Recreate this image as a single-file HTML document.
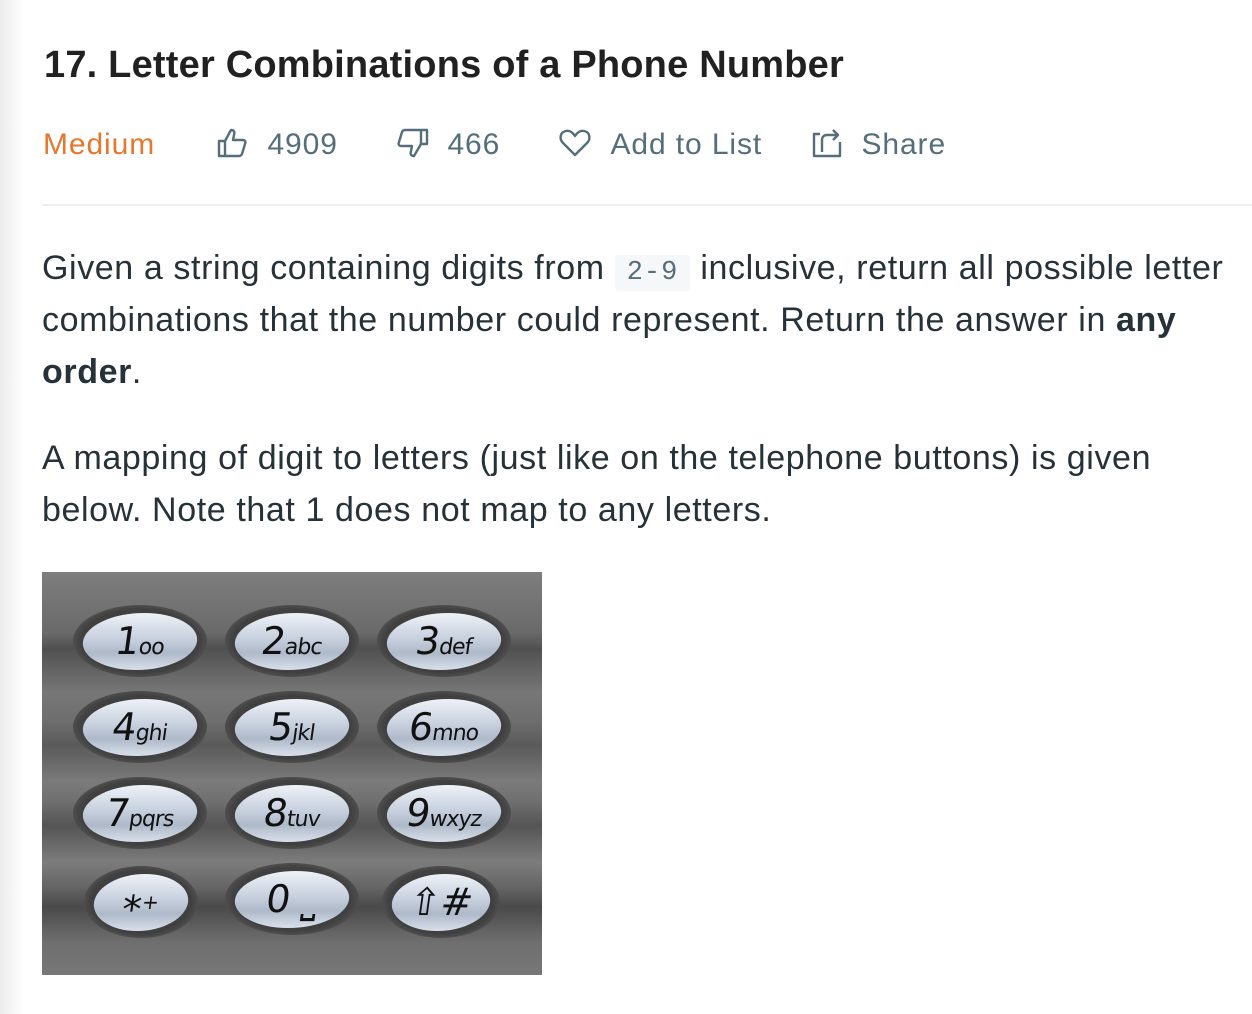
<!DOCTYPE html>
<html><head><meta charset="utf-8"><style>
body{margin:0;width:1252px;height:1014px;background:#fff;position:relative;overflow:hidden;font-family:"Liberation Sans",Helvetica,Arial,sans-serif;color:#263238}
.edge{position:absolute;left:0;top:0;width:24px;height:1014px;background:linear-gradient(90deg,#ececec,#fbfbfb 80%,#fff)}
h1{position:absolute;left:44px;top:44px;margin:0;font-size:38px;font-weight:bold;color:#212121;letter-spacing:0.2px;white-space:nowrap}
.meta{position:absolute;top:128px;font-size:30px;letter-spacing:0.9px;color:#546e7a;white-space:nowrap}
.meta svg{vertical-align:-4px}
.hr{position:absolute;left:42px;right:0;top:204px;height:2px;background:#eeeeee}
p{position:absolute;left:42px;margin:0;font-size:34px;letter-spacing:0.6px;line-height:52px;width:1200px;color:#263238}
code{font-family:"Liberation Mono",monospace;font-size:27px;letter-spacing:1px;background:#f5f7f8;padding:3px 12px;border-radius:4px;color:#546e7a;line-height:1}
.pad{position:absolute;left:42px;top:572px;width:500px;height:403px;background:linear-gradient(180deg,#7e7e7e 0%,#6a6a6a 15%,#505050 19%,#777 30%,#6e6e6e 37%,#5a5a5a 43%,#7b7b7b 52%,#6f6f6f 57%,#555 63%,#7c7c7c 72%,#666 78%,#4a4a4a 83%,#6f6f6f 92%,#777 100%)}
.k{position:absolute;width:134px;height:72px;border-radius:50%;background:radial-gradient(ellipse at center,#404040 62%,#5a5a5a 78%,rgba(90,90,90,0) 100%)}
.k i{position:absolute;left:10px;top:8px;width:114px;height:57px;border-radius:50%;background:linear-gradient(180deg,#eef2f8 0%,#c7d0de 45%,#aeb9c9 70%,#d9e0ea 100%);font-style:normal;font-family:"DejaVu Sans",sans-serif;color:#111;text-align:center;line-height:57px;font-size:38px;transform:skewX(-8deg)}
.k i small{font-size:22px;letter-spacing:-1px}
</style></head><body>
<div class="edge"></div>
<h1>17. Letter Combinations of a Phone Number</h1>
<div class="meta" style="left:43px;color:#e8772e">Medium</div>
<div class="meta" style="left:217px"><svg width="32" height="30" viewBox="0 0 32 30" fill="none" stroke="#546e7a" stroke-width="2.4" stroke-linejoin="round"><path d="M2 13h6v15H2z"/><path d="M8 13l6-11c3 0 4 2 3 5l-1 5h10c2 0 3 2 2 4l-3 10c-1 2-2 2-3 2H8"/></svg> &nbsp;4909</div>
<div class="meta" style="left:397px"><svg width="32" height="30" viewBox="0 0 32 30" fill="none" stroke="#546e7a" stroke-width="2.4" stroke-linejoin="round"><path d="M24 2h6v14h-6z"/><path d="M24 16l-7 12c-3 0-4-2-3-5l1-5H4c-2 0-3-2-2-4L5 4c1-2 2-2 3-2h16"/></svg> &nbsp;466</div>
<div class="meta" style="left:558px"><svg width="34" height="30" viewBox="0 0 34 30" fill="none" stroke="#546e7a" stroke-width="2.4" stroke-linejoin="round"><path d="M17 27L5 15C1 11 2 4 8 3c4-1 7 2 9 5 2-3 5-6 9-5 6 1 7 8 3 12z"/></svg> &nbsp;Add to List</div>
<div class="meta" style="left:811px"><svg width="32" height="30" viewBox="0 0 32 30" fill="none" stroke="#546e7a" stroke-width="2.4" stroke-linejoin="round"><path d="M9 6H3v22h26V14"/><path d="M11 24V12c0-3 2-5 5-5h10M22 2l5 5-5 5"/></svg> &nbsp;Share</div>
<div class="hr"></div>
<p style="top:242px">Given a string containing digits from <code>2-9</code> inclusive, return all possible letter combinations that the number could represent. Return the answer in <b>any order</b>.</p>
<p style="top:432px">A mapping of digit to letters (just like on the telephone buttons) is given below. Note that 1 does not map to any letters.</p>
<div class="pad">
<div class="k" style="left:31px;top:33px"><i>1<small>oo</small></i></div>
<div class="k" style="left:183px;top:33px"><i>2<small>abc</small></i></div>
<div class="k" style="left:335px;top:33px"><i>3<small>def</small></i></div>
<div class="k" style="left:31px;top:119px"><i>4<small>ghi</small></i></div>
<div class="k" style="left:183px;top:119px"><i>5<small>jkl</small></i></div>
<div class="k" style="left:335px;top:119px"><i>6<small>mno</small></i></div>
<div class="k" style="left:31px;top:205px"><i>7<small>pqrs</small></i></div>
<div class="k" style="left:183px;top:205px"><i>8<small>tuv</small></i></div>
<div class="k" style="left:335px;top:205px"><i>9<small>wxyz</small></i></div>
<div class="k" style="left:42px;top:294px;width:114px"><i style="width:94px">*<sup style="font-size:20px">+</sup></i></div>
<div class="k" style="left:183px;top:291px"><i>0 ⎵</i></div>
<div class="k" style="left:340px;top:294px;width:118px"><i style="width:98px">⇧#</i></div>
</div>
</body></html>
